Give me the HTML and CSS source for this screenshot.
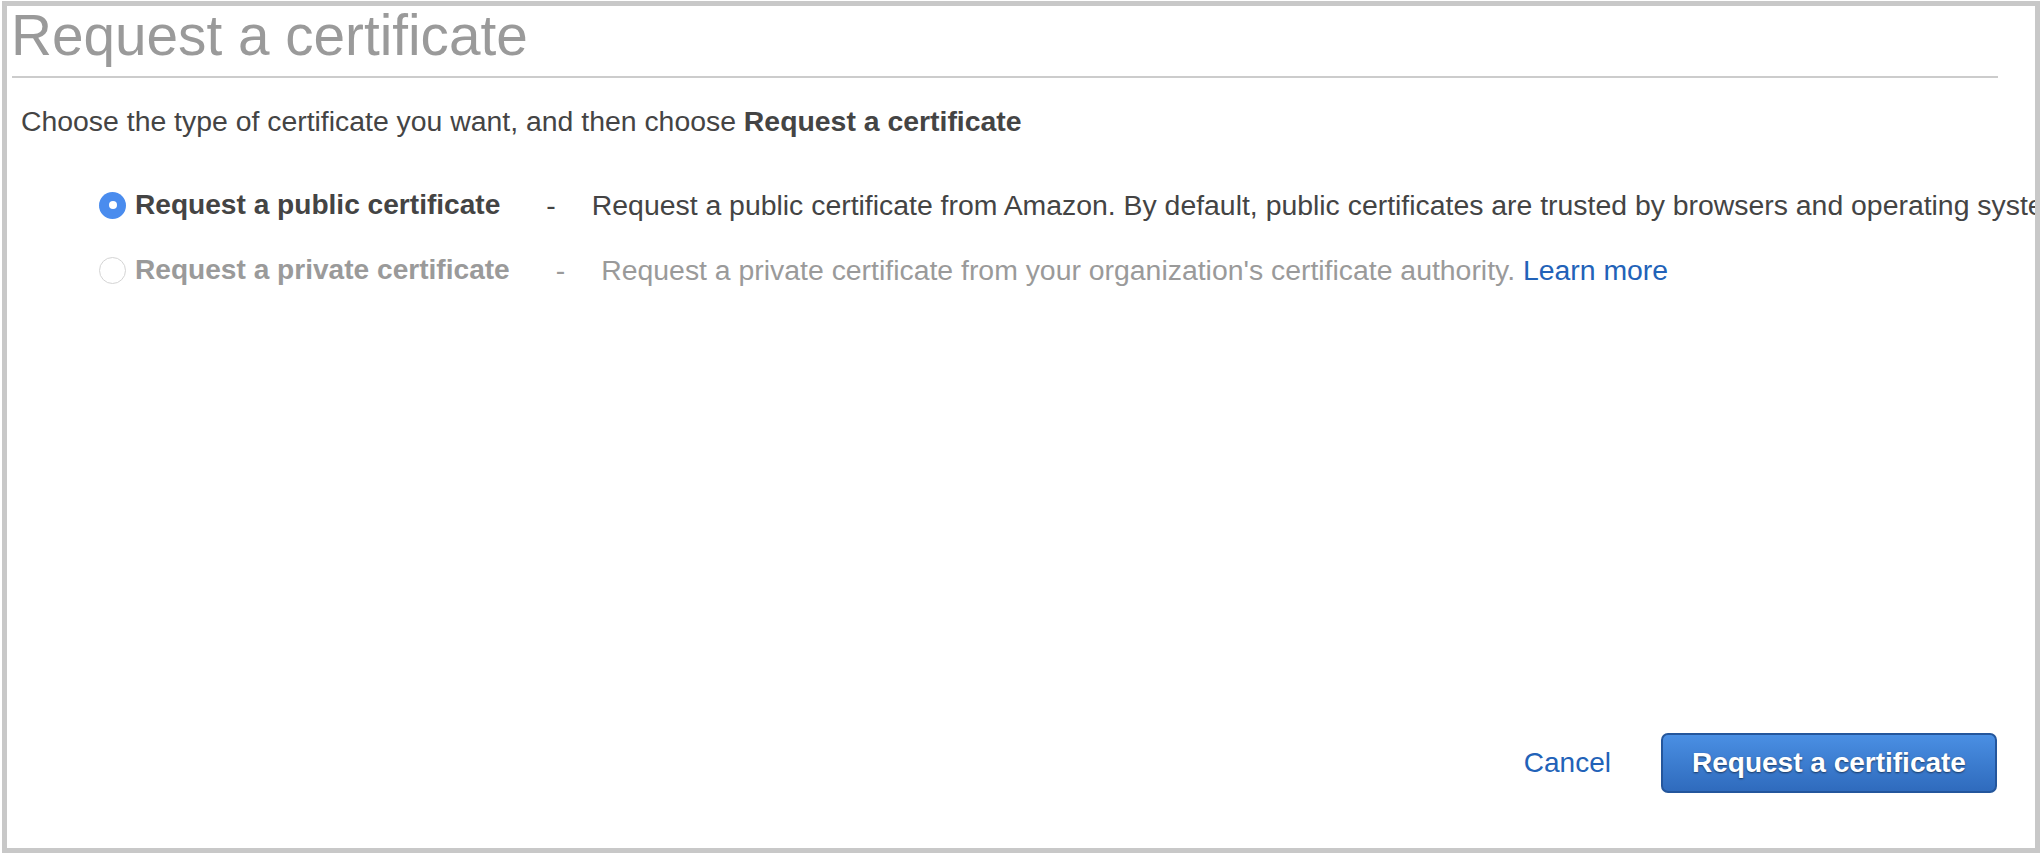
FILE: index.html
```html
<!DOCTYPE html>
<html>
<head>
<meta charset="utf-8">
<title>Request a certificate</title>
<link rel="stylesheet" href="styles.css">
</head>
<body>
<div class="frame">
  <h1 class="title">Request a certificate</h1>
  <div class="rule"></div>
  <p class="intro">Choose the type of certificate you want, and then choose <b>Request a certificate</b></p>
  <div class="options">
    <div class="option">
      <span class="radio radio-on"></span>
      <span class="label">Request a public certificate</span>
      <span class="dash">-</span>
      <span class="desc">Request a public certificate from Amazon. By default, public certificates are trusted by browsers and operating systems.</span>
    </div>
    <div class="option option-off">
      <span class="radio"></span>
      <span class="label">Request a private certificate</span>
      <span class="dash">-</span>
      <span class="desc">Request a private certificate from your organization's certificate authority. <a class="link" href="#">Learn more</a></span>
    </div>
  </div>
  <div class="actions">
    <a class="cancel" href="#">Cancel</a>
    <button class="primary" type="button">Request a certificate</button>
  </div>
</div>
</body>
</html>
```

FILE: styles.css
```css
html, body {
  margin: 0;
  padding: 0;
  background: #ffffff;
}

body {
  font-family: "Liberation Sans", Arial, Helvetica, sans-serif;
  color: #444444;
}

.frame {
  box-sizing: border-box;
  width: 2038px;
  height: 852px;
  margin: 1px 4px 3px 2px;
  border: 5px solid #c8c8c8;
  display: flex;
  flex-direction: column;
  overflow: hidden;
  background: #ffffff;
}

.title {
  margin: 2px 0 0 0;
  padding-left: 4px;
  font-size: 56.7px;
  line-height: 56px;
  font-weight: normal;
  color: #9a9a9a;
}

.rule {
  height: 2px;
  background: #cccccc;
  margin: 12px 37px 0 5px;
}

.intro {
  margin: 26px 0 0 0;
  padding-left: 14px;
  font-size: 28.4px;
  line-height: 34px;
  white-space: nowrap;
}

.intro b {
  font-weight: bold;
  font-size: 28.4px;
}

.options {
  display: flex;
  flex-direction: column;
  gap: 33px;
  margin-top: 51px;
  padding-left: 92px;
}

.option {
  display: flex;
  align-items: center;
  height: 32px;
  font-size: 28.4px;
  white-space: nowrap;
}

.radio {
  box-sizing: border-box;
  flex: none;
  width: 27px;
  height: 27px;
  border-radius: 50%;
  border: 1.5px solid #d4d4d4;
  background: #ffffff;
  margin-right: 9px;
  display: flex;
  align-items: center;
  justify-content: center;
}

.radio-on {
  border: none;
  background: #4a8cee;
}

.radio-on::after {
  content: "";
  width: 8px;
  height: 8px;
  border-radius: 50%;
  background: #ffffff;
}

.label {
  font-weight: bold;
  font-size: 28.1px;
  color: #444444;
}

.dash {
  margin: 0 36px 0 46px;
}

.desc {
  color: #444444;
}

.option-off .label,
.option-off .dash,
.option-off .desc {
  color: #9a9a9a;
}

.link {
  color: #2262b8;
  text-decoration: none;
}

.actions {
  margin-top: auto;
  display: flex;
  justify-content: flex-end;
  align-items: center;
  gap: 50px;
  padding: 0 38px 55px 0;
}

.cancel {
  font-size: 28px;
  color: #2262b8;
  text-decoration: none;
}

.primary {
  box-sizing: border-box;
  width: 336px;
  height: 60px;
  border: 2px solid #24569c;
  border-radius: 7px;
  background: linear-gradient(to bottom, #4a8fe3 0%, #2f6bbd 100%);
  color: #ffffff;
  font-family: "Liberation Sans", Arial, Helvetica, sans-serif;
  font-size: 28px;
  font-weight: bold;
  text-shadow: 0 1px 2px rgba(0, 0, 0, 0.55);
  padding: 0;
  cursor: pointer;
}
```
